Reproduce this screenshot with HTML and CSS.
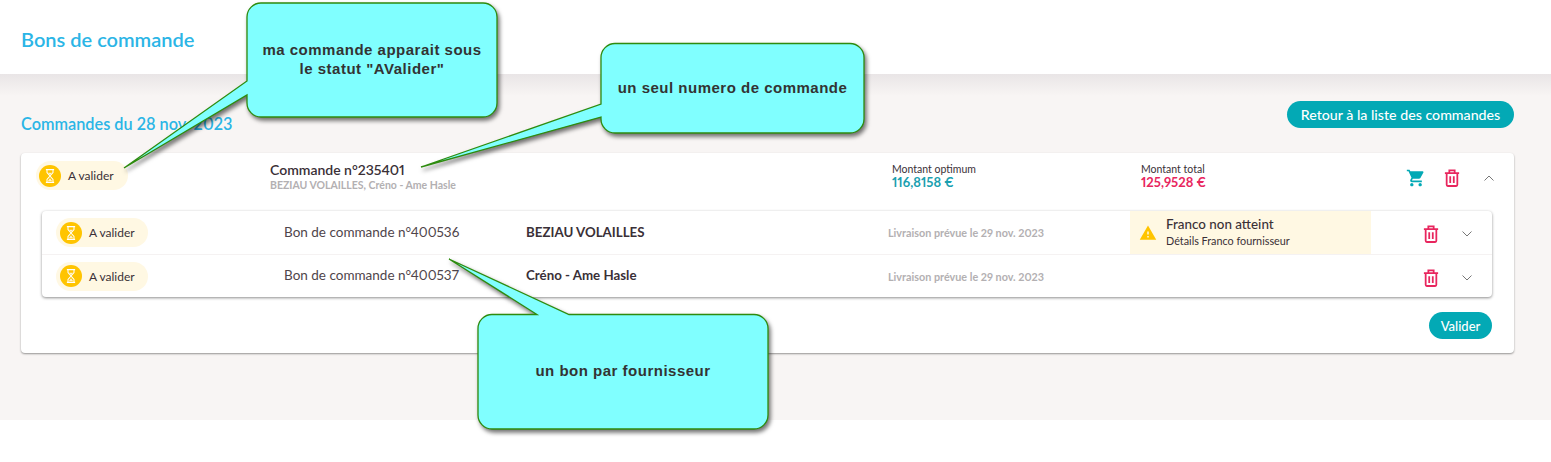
FILE: index.html
```html
<!DOCTYPE html>
<html lang="en">
<head>
  <meta charset="UTF-8">
  <meta name="viewport" content="width=device-width, initial-scale=1.0">
  <title>Bons de commande</title>
  <link rel="stylesheet" href="styles.css">
</head>
<body>
  <svg class="sprite" aria-hidden="true">
    <symbol id="hourglass" viewBox="0 0 24 24"><path d="M6.500 3.500h11M6.500 20.500h11M8 4v3.500l4 4.500-4 4.500V20M16 4v3.500L12 12l4 4.500V20" fill="none" stroke="currentColor" stroke-width="1.400"/><path d="M9.500 7.500h5L12 10.500zM12 15l3 4H9z" fill="currentColor" opacity="0.8"/></symbol>
    <symbol id="trash" viewBox="0 0 18 20"><path d="M1 4.5h16M3 4.5v13.2c0 .8.6 1.3 1.3 1.3h9.4c.7 0 1.3-.5 1.3-1.3V4.500M6 4.500V1.500h6v3M7 8v7.500M11 8v7.500" fill="none" stroke="currentColor" stroke-width="2"/></symbol>
    <symbol id="cart" viewBox="0 0 24 24"><path d="M7 18c-1.100 0-1.990.9-1.990 2S5.900 22 7 22s2-.9 2-2-.9-2-2-2zM1 2v2h2l3.600 7.590-1.350 2.450c-.16.28-.25.61-.25.96 0 1.100.9 2 2 2h12v-2H7.420c-.14 0-.25-.11-.25-.25l.03-.12.9-1.630h7.450c.75 0 1.410-.41 1.750-1.030l3.580-6.490c.08-.14.12-.31.12-.48 0-.55-.45-1-1-1H5.210l-.94-2H1zm16 16c-1.100 0-1.990.9-1.990 2s.89 2 1.990 2 2-.9 2-2-.9-2-2-2z"/></symbol>
    <symbol id="warning" viewBox="0 0 24 24"><path d="M1 21h22L12 2 1 21zm12-3h-2v-2h2v2zm0-4h-2v-4h2v4z"/></symbol>
    <symbol id="chev-up" viewBox="0 0 10 6"><path d="M.5 5.500 5 1l4.500 4.500" fill="none" stroke="currentColor"/></symbol>
    <symbol id="chev-down" viewBox="0 0 10 6"><path d="M.5.500 5 5 9.500.500" fill="none" stroke="currentColor"/></symbol>
  </svg>

  <header class="top">
    <h1>Bons de commande</h1>
  </header>

  <main class="content">
    <div class="title-row">
      <h2>Commandes du 28 nov. 2023</h2>
      <button class="btn btn-back">Retour à la liste des commandes</button>
    </div>

    <section class="card">
      <div class="order">
        <div class="status"><span class="status-dot"><svg><use href="#hourglass"/></svg></span>A valider</div>
        <div>
          <div class="order-name">Commande n°235401</div>
          <div class="order-sub">BEZIAU VOLAILLES, Créno - Ame Hasle</div>
        </div>
        <div>
          <div class="amount-label">Montant optimum</div>
          <div class="amount amount-ok">116,8158 €</div>
        </div>
        <div>
          <div class="amount-label">Montant total</div>
          <div class="amount amount-total">125,9528 €</div>
        </div>
        <div class="actions">
          <svg class="icon-cart"><use href="#cart"/></svg>
          <svg class="icon-trash"><use href="#trash"/></svg>
          <svg class="icon-chev"><use href="#chev-up"/></svg>
        </div>
      </div>

      <div class="bons">
        <div class="bon">
          <div class="status"><span class="status-dot"><svg><use href="#hourglass"/></svg></span>A valider</div>
          <div class="bon-name">Bon de commande n°400536</div>
          <div class="supplier">BEZIAU VOLAILLES</div>
          <div class="delivery">Livraison prévue le 29 nov. 2023</div>
          <div class="franco">
            <svg class="icon-warning"><use href="#warning"/></svg>
            <div>
              <div class="franco-title">Franco non atteint</div>
              <div class="franco-link">Détails Franco fournisseur</div>
            </div>
          </div>
          <div class="actions">
            <svg class="icon-trash"><use href="#trash"/></svg>
            <svg class="icon-chev"><use href="#chev-down"/></svg>
          </div>
        </div>
        <div class="bon">
          <div class="status"><span class="status-dot"><svg><use href="#hourglass"/></svg></span>A valider</div>
          <div class="bon-name">Bon de commande n°400537</div>
          <div class="supplier">Créno - Ame Hasle</div>
          <div class="delivery">Livraison prévue le 29 nov. 2023</div>
          <div></div>
          <div class="actions">
            <svg class="icon-trash"><use href="#trash"/></svg>
            <svg class="icon-chev"><use href="#chev-down"/></svg>
          </div>
        </div>
      </div>

      <div class="card-foot">
        <button class="btn btn-validate">Valider</button>
      </div>
    </section>
  </main>

  <!-- annotation bubbles laid over the screenshot -->
  <svg class="bubbles" viewBox="0 0 1551 462">
    <path d="M261 3H483a14 14 0 0 1 14 14V103a14 14 0 0 1-14 14H261a14 14 0 0 1-14-14V95L124 168 247 81V17a14 14 0 0 1 14-14z"/>
    <path d="M615 43.500H850a14 14 0 0 1 14 14V119a14 14 0 0 1-14 14H615a14 14 0 0 1-14-14V117L421 167 601 104V57.500a14 14 0 0 1 14-14z"/>
    <path d="M492 314.500H537L449 259 569 314.500H754a14 14 0 0 1 14 14V415a14 14 0 0 1-14 14H492a14 14 0 0 1-14-14V328.500a14 14 0 0 1 14-14z"/>
  </svg>
  <div class="note note-status">ma commande apparait sous<br>le statut "AValider"</div>
  <div class="note note-number">un seul numero de commande</div>
  <div class="note note-supplier">un bon par fournisseur</div>
</body>
</html>
```

FILE: styles.css
```css
body {
  margin: 0;
  height: 462px;
  overflow: hidden;
  position: relative;
  background: #fff;
  color: #3a3037;
  font-family: Lato, "Liberation Sans", sans-serif;
  font-variant-numeric: proportional-nums;
}

.sprite {
  position: absolute;
  width: 0;
  height: 0;
}

.top {
  height: 74px;
  display: flex;
  align-items: center;
  padding: 0 21px;
  box-sizing: border-box;
}

h1 {
  margin: 0 0 -4px;
  font-size: 20px;
  font-weight: 600;
  color: #2bb5e6;
}

.content {
  height: 346px;
  box-sizing: border-box;
  padding: 27px 37px 0 21px;
  background: linear-gradient(#e9e5e6, #f8f5f4 22px);
}

.title-row {
  display: flex;
  justify-content: space-between;
  align-items: flex-start;
  height: 27px;
}

h2 {
  margin: 13px 0 0;
  font-size: 16.300px;
  font-weight: 600;
  color: #2bb5e6;
}

.btn {
  border: none;
  border-radius: 14px;
  background: #03a9b5;
  color: #fff;
  font-family: inherit;
  font-size: 14.200px;
  font-weight: 500;
  height: 27px;
  padding: 0;
}

.btn-back {
  width: 227px;
}

.btn-validate {
  width: 63px;
  font-size: 13px;
}

.card {
  margin-top: 25px;
  height: 200px;
  background: #fff;
  border-radius: 4px;
  box-shadow: 0 1px 2px rgba(0, 0, 0, 0.4);
}

.order {
  height: 58px;
  box-sizing: border-box;
  padding: 8px 20px 0 15px;
  display: grid;
  grid-template-columns: 234px 622px 249px 250px 1fr;
  align-items: start;
}

.status {
  display: flex;
  align-items: center;
  gap: 7px;
  width: 92px;
  height: 29px;
  box-sizing: border-box;
  padding-left: 3px;
  border-radius: 15px;
  background: #fff8e3;
  font-size: 12px;
  color: #3a3037;
}

.bon .status {
  padding-left: 4px;
}

.status-dot {
  width: 22px;
  height: 22px;
  border-radius: 50%;
  background: #ffc400;
  display: flex;
  align-items: center;
  justify-content: center;
  color: #fff;
}

.status-dot svg {
  width: 18px;
  height: 18px;
}

.order-name {
  font-size: 14px;
  font-weight: 600;
  line-height: 17px;
}

.order-sub {
  margin-top: 1px;
  font-size: 10.500px;
  font-weight: 700;
  line-height: 12px;
  color: #b3b0b2;
}

.amount-label {
  margin-top: 2px;
  font-size: 10.500px;
  line-height: 12px;
}

.amount {
  font-size: 13px;
  font-weight: 700;
  line-height: 14px;
}

.amount-ok {
  color: #1a9fb0;
}

.amount-total {
  color: #e8265e;
}

.actions {
  display: flex;
  align-items: center;
  justify-content: flex-end;
}

.order .actions {
  height: 34px;
}

.bon .actions {
  padding-top: 3px;
}

.icon-cart {
  width: 20px;
  height: 20px;
  fill: #03a9b5;
  margin-right: 18px;
}

.icon-trash {
  width: 16px;
  height: 18px;
  color: #e8265e;
  margin-right: 23px;
}

.order .icon-trash {
  margin-right: 24px;
}

.icon-chev {
  width: 10px;
  height: 6px;
  color: #777;
}

.bons {
  margin: 0 22px 0 21px;
  height: 86px;
  border-radius: 4px;
  box-shadow: 0 1px 3px rgba(0, 0, 0, 0.45);
}

.bon {
  height: 43px;
  box-sizing: border-box;
  padding: 0 20px 0 14px;
  display: grid;
  grid-template-columns: 228px 242px 362px 242px 241px 1fr;
  align-items: center;
}

.bon + .bon {
  border-top: 1px solid #f5f2f2;
}

.bon-name {
  margin-bottom: 2px;
  font-size: 13.500px;
  color: #4f454b;
}

.supplier {
  margin-bottom: 2px;
  font-size: 13.300px;
  font-weight: 700;
  color: #3a3037;
}

.delivery {
  font-size: 10.800px;
  font-weight: 700;
  color: #b3b0b2;
}

.franco {
  height: 43px;
  background: #fff8e3;
  display: flex;
  align-items: center;
  gap: 9px;
  padding-left: 9px;
}

.icon-warning {
  width: 18px;
  height: 18px;
  fill: #ffc400;
  flex: none;
}

.franco-title {
  font-size: 13.400px;
  font-weight: 500;
  line-height: 17px;
}

.franco-link {
  font-size: 10.800px;
  line-height: 16px;
}

.card-foot {
  display: flex;
  justify-content: flex-end;
  padding: 15px 22px 0 0;
}

/* annotations */
.bubbles {
  position: absolute;
  left: 0;
  top: 0;
  width: 1551px;
  height: 462px;
  fill: #80ffff;
  stroke: #2e8b0e;
  stroke-width: 1.300;
  filter: drop-shadow(2px 3px 2px rgba(0, 0, 0, 0.55));
}

.note {
  position: absolute;
  display: flex;
  align-items: center;
  justify-content: center;
  text-align: center;
  box-sizing: border-box;
  padding-bottom: 2px;
  font-family: "Liberation Sans", sans-serif;
  font-size: 15px;
  font-weight: 700;
  line-height: 19px;
  letter-spacing: 0.5px;
  color: #333;
}

.note-status {
  left: 247px;
  top: 3px;
  width: 250px;
  height: 114px;
}

.note-number {
  left: 601px;
  top: 43px;
  width: 263px;
  height: 90px;
}

.note-supplier {
  left: 478px;
  top: 314px;
  width: 290px;
  height: 115px;
}
```
